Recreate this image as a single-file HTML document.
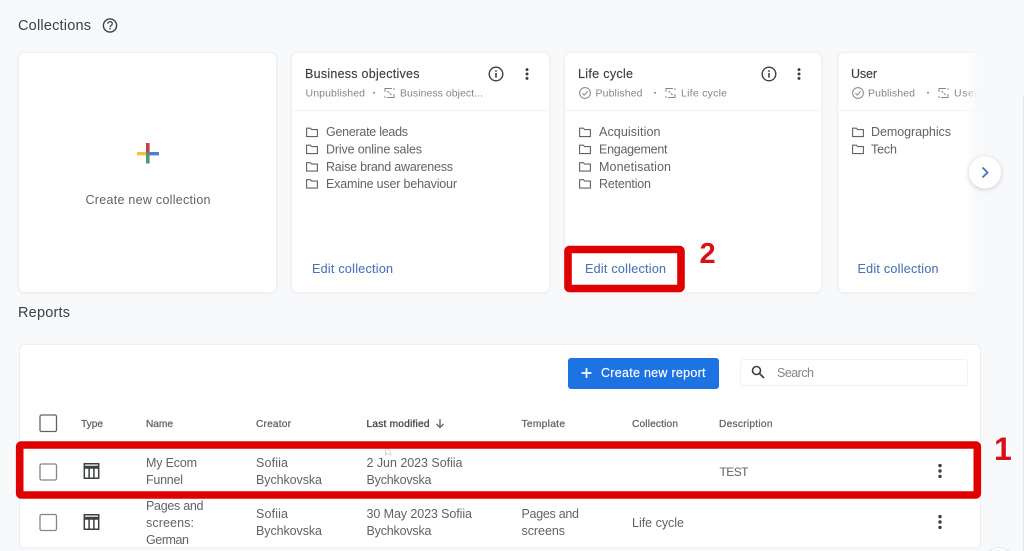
<!DOCTYPE html>
<html>
<head>
<meta charset="utf-8">
<style>
html,body{margin:0;padding:0;width:1024px;height:551px;overflow:hidden;background:#f8f9fb}
svg{display:block;position:absolute;left:0;top:0;overflow:hidden;filter:blur(.35px)}
text{font-family:"Liberation Sans",sans-serif}
.h{font-size:14.500px;fill:#3c4043}
.t{font-size:12.500px;fill:#3c4043;stroke:#3c4043;stroke-width:.15px}
.s{font-size:10.500px;fill:#80868b}
.l{font-size:12.500px;fill:#5f6368}
.e{font-size:12.500px;fill:#4a74b4;stroke:#4a74b4;stroke-width:.1px}
.c{font-size:10.200px;fill:#5f6368;stroke:#5f6368;stroke-width:.25px}
.r{font-size:12.500px;fill:#5f6368}
.n{font-weight:700;fill:#d9101a;stroke:#fff;stroke-width:2px;paint-order:stroke}
</style>
</head>
<body>
<svg width="1024" height="551" viewBox="0 0 1024 551" xmlns="http://www.w3.org/2000/svg">
<defs>
<filter id="sh" x="-5%" y="-5%" width="110%" height="110%"><feDropShadow dx="0" dy="0.5" stdDeviation="1" flood-color="#3c4043" flood-opacity=".07"/></filter>
<filter id="sb" x="-40%" y="-40%" width="180%" height="180%"><feDropShadow dx="0" dy="1" stdDeviation="2" flood-color="#3c4043" flood-opacity=".25"/></filter>
<linearGradient id="fade" x1="0" x2="1" y1="0" y2="0"><stop offset="0" stop-color="#f8f9fb" stop-opacity="0"/><stop offset="1" stop-color="#f8f9fb"/></linearGradient>
<g id="folder"><path d="M.6 1.200H4.400L5.600 2.600H11.400V9.600H.6Z" fill="none" stroke="#5f6368" stroke-width="1.100"/></g>
<g id="info"><circle cx="0" cy="0" r="6.800" fill="none" stroke="#3c4043" stroke-width="1.400"/><rect x="-.8" y="-1" width="1.600" height="4.600" fill="#3c4043"/><rect x="-.8" y="-3.800" width="1.600" height="1.600" fill="#3c4043"/></g>
<g id="kebab"><circle cx="0" cy="-4.400" r="1.500" fill="#3c4043"/><circle cx="0" cy="0" r="1.500" fill="#3c4043"/><circle cx="0" cy="4.400" r="1.500" fill="#3c4043"/></g>
<g id="kebab2"><circle cx="0" cy="-5.400" r="1.700" fill="#3c4043"/><circle cx="0" cy="0" r="1.700" fill="#3c4043"/><circle cx="0" cy="5.400" r="1.700" fill="#3c4043"/></g>
<g id="check"><circle cx="0" cy="0" r="5.400" fill="none" stroke="#80868b" stroke-width="1"/><path d="M-2.600 .2L-.7 2.100L2.700-1.800" fill="none" stroke="#80868b" stroke-width="1"/></g>
<g id="sync"><path d="M2.500-4.500H-4.500V-1M-2.500 4.500H4.500V1M-2-2L-.3-.3M.3.3L2 2M-4.500 3V4.800M4.500-3V-4.800" fill="none" stroke="#80868b" stroke-width="1"/></g>
<g id="table"><path d="M.8.8H15.200V15.200H.8ZM.8 3.500H15.200M.8 5H15.200M5.600 5.200V15.200M10.400 5.200V15.200" fill="none" stroke="#3c4043" stroke-width="1.500"/></g>
<clipPath id="cardclip"><rect x="830" y="40" width="147" height="260"/></clipPath>
</defs>

<rect width="1024" height="551" fill="#f8f9fb"/>
<rect x="1023" y="97" width="1" height="454" fill="#e3e5e9"/>

<!-- Heading -->
<text x="18" y="30" class="h" textLength="73" lengthAdjust="spacing">Collections</text>
<circle cx="110" cy="25.500" r="6.600" fill="none" stroke="#3c4043" stroke-width="1.400"/>
<path d="M107.800 23.900c0-3 4.500-3 4.500-.2 0 1.700-2.200 1.700-2.200 3.500" fill="none" stroke="#3c4043" stroke-width="1.200"/>
<rect x="109.400" y="28" width="1.400" height="1.400" fill="#3c4043"/>

<!-- Create card -->
<rect x="18.500" y="52.500" width="258" height="240" rx="6" fill="#fff" stroke="#eceef1" filter="url(#sh)"/>
<rect x="146" y="143" width="3.600" height="10" fill="#c5403f"/>
<rect x="146" y="153" width="3.600" height="10.500" fill="#4f9a6c"/>
<rect x="137" y="152" width="9.500" height="3.400" fill="#eec244"/>
<rect x="149" y="152" width="10" height="3.400" fill="#4a7fd0"/>
<rect x="146" y="152" width="3.600" height="3.400" fill="#6a7f80"/>
<text x="85.500" y="204" class="l" textLength="125" lengthAdjust="spacing">Create new collection</text>

<!-- Card 2 -->
<rect x="291.500" y="52.500" width="258" height="240" rx="6" fill="#fff" stroke="#eef0f3" filter="url(#sh)"/>
<rect x="292" y="110" width="257" height="1" fill="#f1f3f4"/>
<text x="305" y="78" class="t" textLength="114.500" lengthAdjust="spacing">Business objectives</text>
<text x="305.500" y="96.500" class="s" textLength="59.500" lengthAdjust="spacing">Unpublished</text>
<circle cx="374" cy="92.800" r="1" fill="#80868b"/>
<use href="#sync" x="389.500" y="93"/>
<text x="400" y="96.500" class="s" textLength="83" lengthAdjust="spacing">Business object...</text>
<use href="#info" x="496" y="74"/>
<use href="#kebab" x="527" y="74"/>
<use href="#folder" x="306" y="127"/><text x="326" y="136" class="l" textLength="82" lengthAdjust="spacing">Generate leads</text>
<use href="#folder" x="306" y="144"/><text x="326" y="153.500" class="l" textLength="96" lengthAdjust="spacing">Drive online sales</text>
<use href="#folder" x="306" y="161.500"/><text x="326" y="171" class="l" textLength="127" lengthAdjust="spacing">Raise brand awareness</text>
<use href="#folder" x="306" y="178.500"/><text x="326" y="188" class="l" textLength="131" lengthAdjust="spacing">Examine user behaviour</text>
<text x="312" y="273" class="e" textLength="81" lengthAdjust="spacing">Edit collection</text>

<!-- Card 3 -->
<rect x="564.500" y="52.500" width="257" height="240" rx="6" fill="#fff" stroke="#eef0f3" filter="url(#sh)"/>
<rect x="565" y="110" width="256" height="1" fill="#f1f3f4"/>
<text x="578" y="78" class="t" textLength="55" lengthAdjust="spacing">Life cycle</text>
<use href="#check" x="585" y="93"/>
<text x="595.500" y="96.500" class="s" textLength="47" lengthAdjust="spacing">Published</text>
<circle cx="655" cy="92.800" r="1" fill="#80868b"/>
<use href="#sync" x="670.500" y="93"/>
<text x="681" y="96.500" class="s" textLength="46" lengthAdjust="spacing">Life cycle</text>
<use href="#info" x="769" y="74"/>
<use href="#kebab" x="799" y="74"/>
<use href="#folder" x="579" y="127"/><text x="599" y="136" class="l" textLength="61.500" lengthAdjust="spacing">Acquisition</text>
<use href="#folder" x="579" y="144"/><text x="599" y="153.500" class="l" textLength="68.500" lengthAdjust="spacing">Engagement</text>
<use href="#folder" x="579" y="161.500"/><text x="599" y="171" class="l" textLength="72" lengthAdjust="spacing">Monetisation</text>
<use href="#folder" x="579" y="178.500"/><text x="599" y="188" class="l" textLength="52" lengthAdjust="spacing">Retention</text>
<text x="585" y="273" class="e" textLength="81" lengthAdjust="spacing">Edit collection</text>

<!-- Card 4 -->
<g clip-path="url(#cardclip)">
<rect x="838" y="52.500" width="180" height="240" rx="6" fill="#fff" stroke="#eef0f3" filter="url(#sh)"/>
<rect x="839" y="110" width="180" height="1" fill="#f1f3f4"/>
<text x="851" y="78" class="t" textLength="26" lengthAdjust="spacing">User</text>
<use href="#check" x="858" y="93"/>
<text x="868" y="96.500" class="s" textLength="47" lengthAdjust="spacing">Published</text>
<circle cx="928" cy="92.800" r="1" fill="#80868b"/>
<use href="#sync" x="943.500" y="93"/>
<text x="954" y="96.500" class="s" textLength="24" lengthAdjust="spacing">User</text>
<use href="#folder" x="852" y="127"/><text x="871" y="136" class="l" textLength="80" lengthAdjust="spacing">Demographics</text>
<use href="#folder" x="852" y="144"/><text x="871" y="153.500" class="l" textLength="26" lengthAdjust="spacing">Tech</text>
<text x="857.500" y="273" class="e" textLength="81" lengthAdjust="spacing">Edit collection</text>
</g>
<rect x="964" y="50" width="14" height="245" fill="url(#fade)"/>
<circle cx="985" cy="172.500" r="16" fill="#fff" filter="url(#sb)"/>
<path d="M982.500 167.500L987.500 172.500L982.500 177.500" fill="none" stroke="#4173b8" stroke-width="1.800"/>

<!-- Reports -->
<text x="18" y="317" class="h" textLength="52" lengthAdjust="spacing">Reports</text>
<rect x="19.500" y="344.500" width="961" height="203.500" rx="5" fill="#fff" stroke="#eceef1"/>
<path d="M989 551Q999 544 1009 551Z" fill="#fff" stroke="#e3e5e9" stroke-width=".8"/>

<rect x="568" y="358" width="151" height="31" rx="3" fill="#1d73e2"/>
<path d="M586.500 368V378M581.500 373H591.500" stroke="#fff" stroke-width="1.700"/>
<text x="601" y="377" font-size="12.500" fill="#fff" stroke="#fff" stroke-width=".15" textLength="104.500" lengthAdjust="spacing">Create new report</text>

<rect x="740.500" y="359.500" width="227" height="26" rx="3" fill="#fff" stroke="#f0f1f3"/>
<circle cx="756.500" cy="370.500" r="4" fill="none" stroke="#3c4043" stroke-width="1.600"/>
<path d="M759.500 373.500L764 378" stroke="#3c4043" stroke-width="1.800"/>
<text x="777" y="377" font-size="12.500" fill="#80868b" textLength="37" lengthAdjust="spacing">Search</text>

<!-- Table header -->
<rect x="40" y="415" width="16.500" height="16.500" rx="1.500" fill="#fff" stroke="#5f6368" stroke-width="1.300"/>
<text x="81" y="427" class="c" textLength="22" lengthAdjust="spacing">Type</text>
<text x="146" y="427" class="c" textLength="27" lengthAdjust="spacing">Name</text>
<text x="256" y="427" class="c" textLength="35" lengthAdjust="spacing">Creator</text>
<text x="366.500" y="427" class="c" style="fill:#3c4043;stroke:#3c4043" textLength="63" lengthAdjust="spacing">Last modified</text>
<path d="M440 419V427M436.500 424L440 427.500L443.500 424" fill="none" stroke="#5f6368" stroke-width="1.300"/>
<text x="521.500" y="427" class="c" textLength="43.500" lengthAdjust="spacing">Template</text>
<text x="632" y="427" class="c" textLength="46" lengthAdjust="spacing">Collection</text>
<text x="719" y="427" class="c" textLength="53.500" lengthAdjust="spacing">Description</text>

<!-- Row 1 -->
<rect x="40" y="464" width="16.500" height="16" rx="1.500" fill="#fff" stroke="#80868b" stroke-width="1.300"/>
<use href="#table" x="83.500" y="463"/>
<text x="146" y="467" class="r" textLength="51" lengthAdjust="spacing">My Ecom</text>
<text x="146" y="484" class="r" textLength="37" lengthAdjust="spacing">Funnel</text>
<text x="256" y="467" class="r" textLength="32" lengthAdjust="spacing">Sofiia</text>
<text x="256" y="484" class="r" textLength="66" lengthAdjust="spacing">Bychkovska</text>
<text x="366.500" y="467" class="r" textLength="96" lengthAdjust="spacing">2 Jun 2023 Sofiia</text>
<text x="366.500" y="484" class="r" textLength="65" lengthAdjust="spacing">Bychkovska</text>
<text x="719.500" y="476" class="r" style="font-size:12px" textLength="29" lengthAdjust="spacing">TEST</text>
<use href="#kebab2" x="940" y="471"/>

<!-- Row 2 -->
<rect x="40" y="514.500" width="16.500" height="16" rx="1.500" fill="#fff" stroke="#80868b" stroke-width="1.300"/>
<use href="#table" x="83.500" y="514"/>
<text x="146" y="510" class="r" textLength="57.500" lengthAdjust="spacing">Pages and</text>
<text x="146" y="527" class="r" textLength="48" lengthAdjust="spacing">screens:</text>
<text x="146" y="544" class="r" textLength="43" lengthAdjust="spacing">German</text>
<text x="256" y="518" class="r" textLength="32" lengthAdjust="spacing">Sofiia</text>
<text x="256" y="535" class="r" textLength="66" lengthAdjust="spacing">Bychkovska</text>
<text x="366.500" y="518" class="r" textLength="105.500" lengthAdjust="spacing">30 May 2023 Sofiia</text>
<text x="366.500" y="535" class="r" textLength="65" lengthAdjust="spacing">Bychkovska</text>
<text x="521.500" y="518" class="r" textLength="57.500" lengthAdjust="spacing">Pages and</text>
<text x="521.500" y="535" class="r" textLength="43.500" lengthAdjust="spacing">screens</text>
<text x="632" y="527" class="r" textLength="52" lengthAdjust="spacing">Life cycle</text>
<use href="#kebab2" x="940" y="522"/>

<!-- Cursor -->
<path d="M385.500 446V455L387 453.500L391 455L390 451L385.500 446Z" fill="#fff" stroke="#c9ccd1" stroke-width=".8"/>

<!-- Red annotations -->
<rect x="568" y="249.500" width="113" height="39" rx="1.500" fill="none" stroke="#e00000" stroke-width="7.600"/>
<rect x="19.700" y="445" width="957.600" height="50" rx="1.500" fill="none" stroke="#e00000" stroke-width="7.600"/>
<text x="699.500" y="263" class="n" font-size="29">2</text>
<text x="994" y="460" class="n" font-size="32">1</text>
</svg>
</body>
</html>
